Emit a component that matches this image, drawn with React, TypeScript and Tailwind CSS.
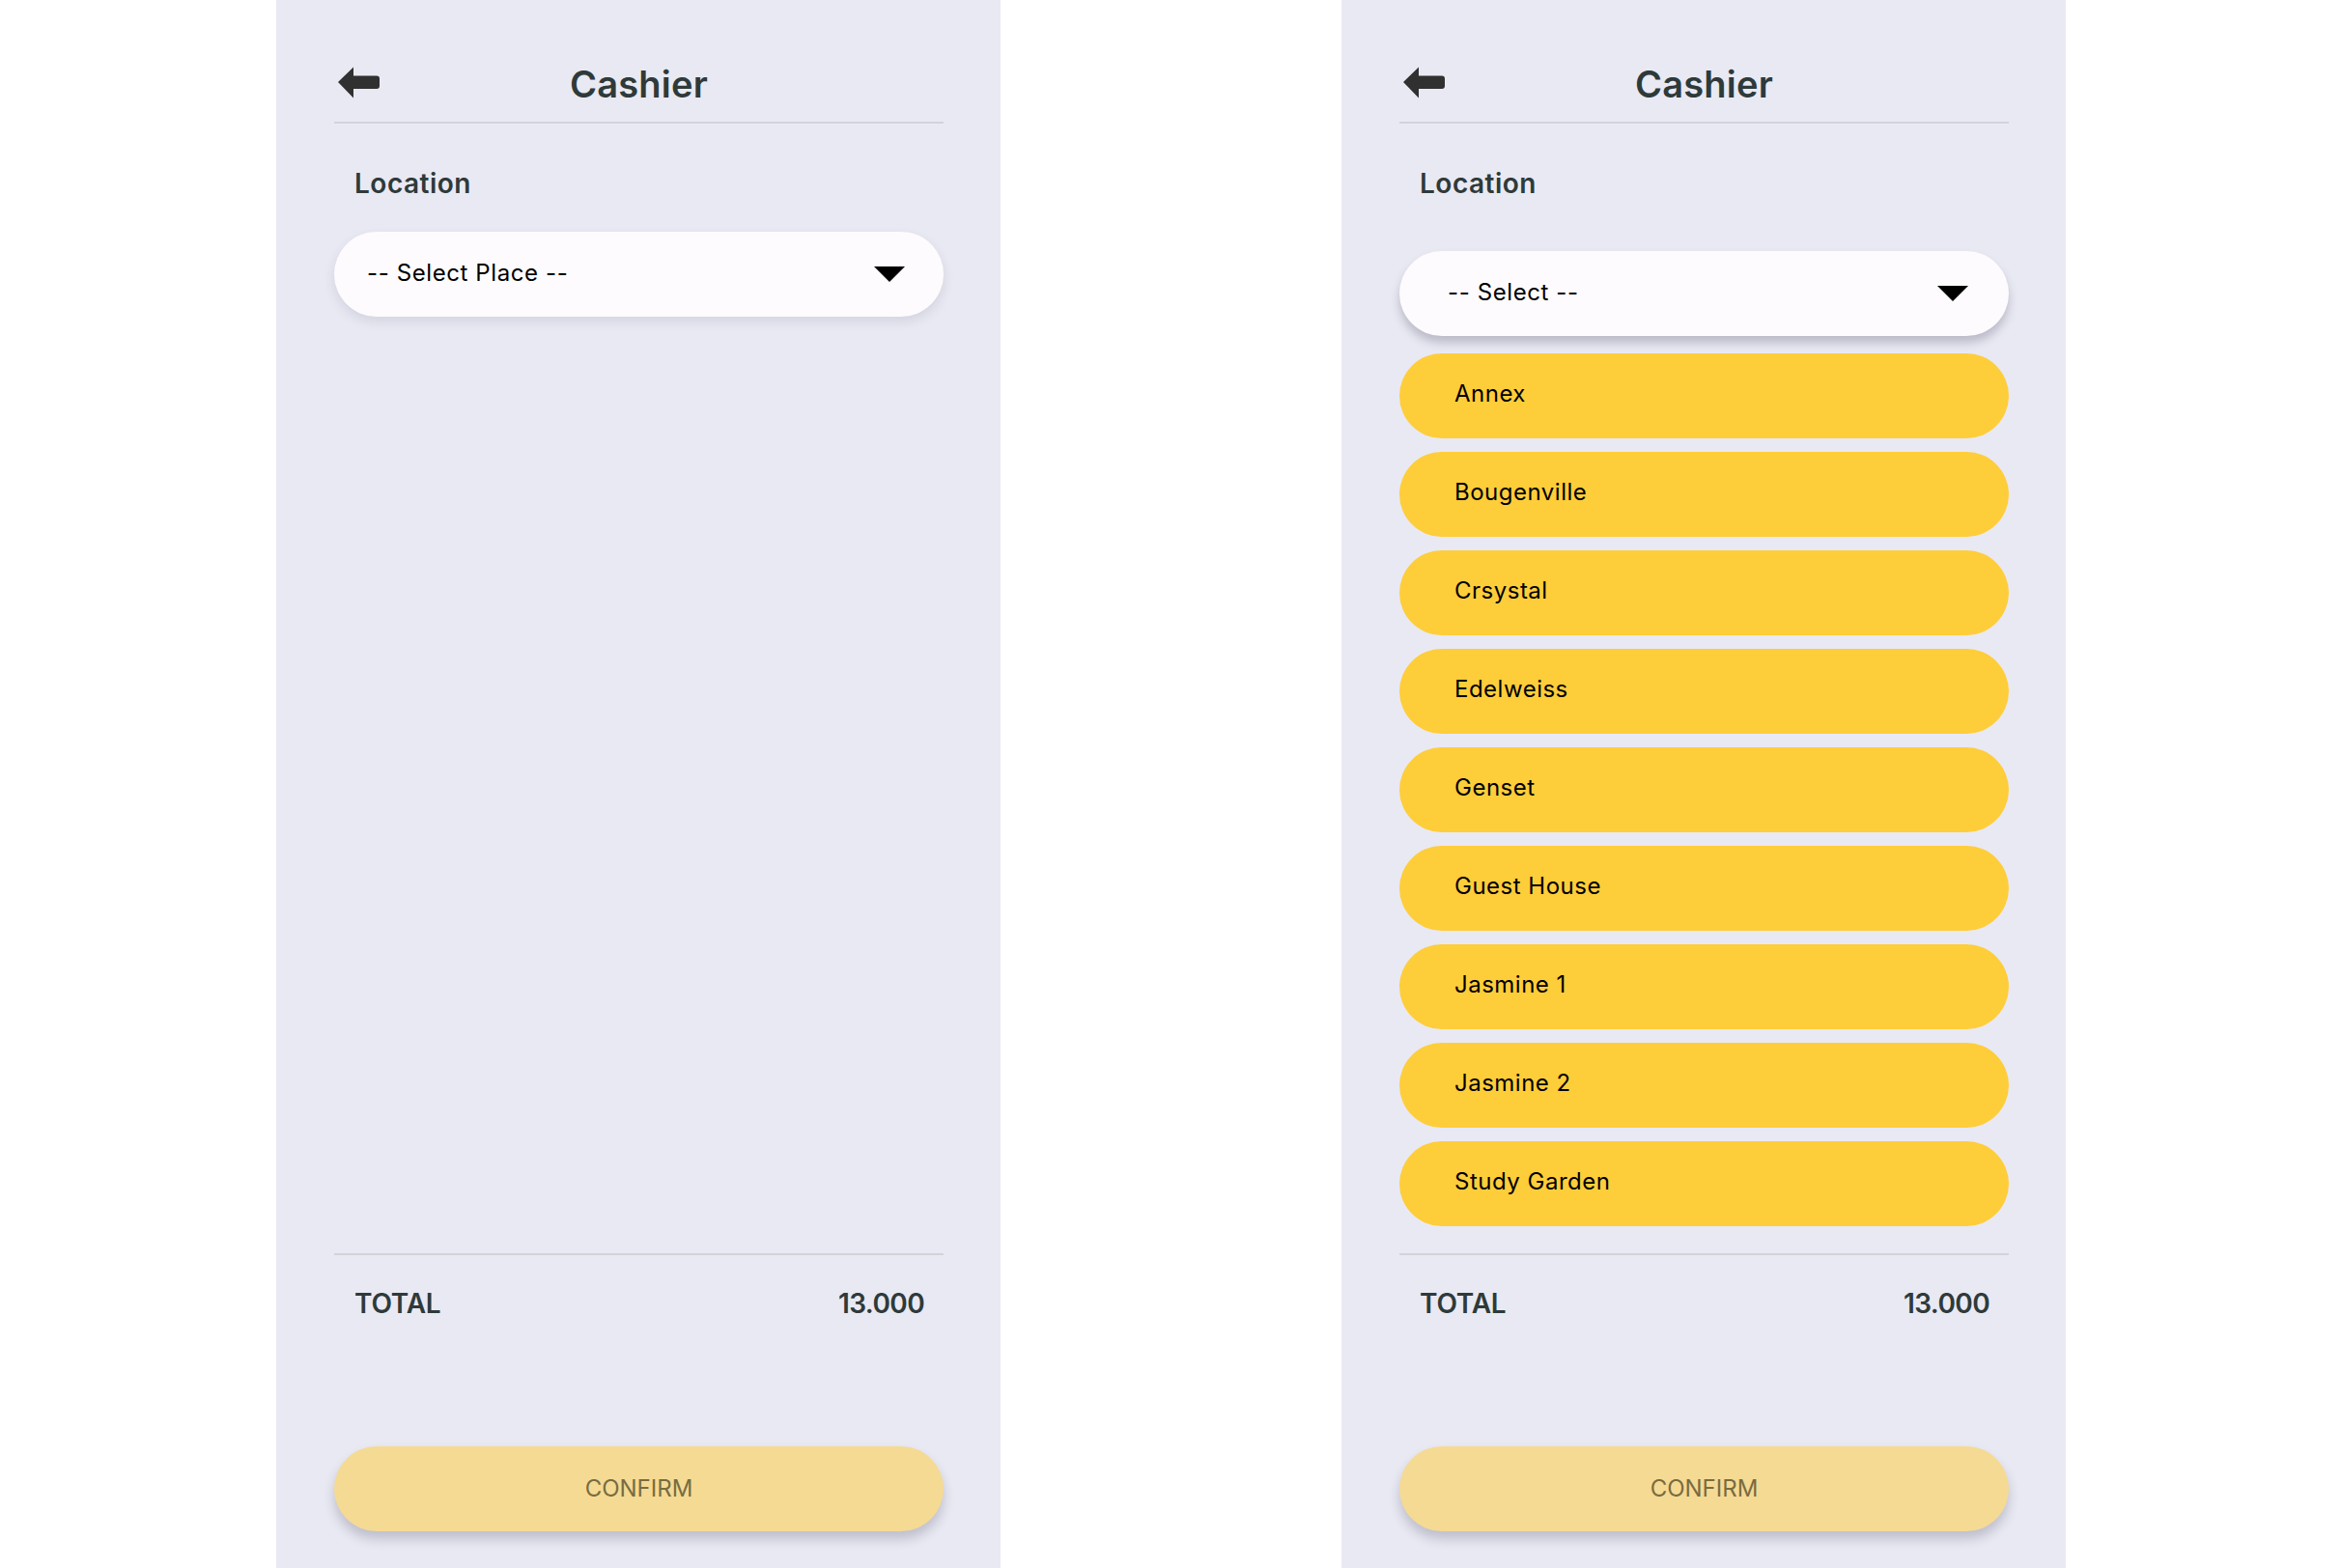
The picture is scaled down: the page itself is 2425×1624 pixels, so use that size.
import React from "react";

const FONT = { fontFamily: "Inter, 'Noto Sans', 'Open Sans', sans-serif" };

function BackArrow() {
  return (
    <svg width="46" height="34" viewBox="0 0 46 34" className="block">
      <path
        d="M1 16 L17 0.5 L17 9.5 L41 9.5 Q44 9.5 44 12.5 L44 20 Q44 23 41 23 L17 23 L17 32.5 Z"
        fill="#303030"
      />
    </svg>
  );
}

function Caret() {
  return (
    <svg width="32" height="16" viewBox="0 0 32 16" className="block">
      <polygon points="0,0 32,0 16,16" fill="#000000" />
    </svg>
  );
}

function Header() {
  return (
    <div className="pt-[67px] pb-[19px] border-b-2 border-[#d3d3d9]">
      <div className="grid grid-cols-[1fr_auto_1fr] items-center h-[40px]">
        <div className="pl-[3px] -mt-[2px]">
          <BackArrow />
        </div>
        <div className="text-[38px] leading-[40px] font-semibold text-[#2e3a3a] tracking-[0.2px]">
          Cashier
        </div>
        <div />
      </div>
    </div>
  );
}

function Footer() {
  return (
    <div className="border-t-2 border-[#d3d3d9] pb-[38px]">
      <div className="mt-[36px] flex justify-between pl-[21px] pr-[20px] text-[28px] leading-[28px] font-semibold text-[#2e3a3a]">
        <span className="tracking-[-0.2px]">TOTAL</span>
        <span className="tracking-[-0.6px]">13.000</span>
      </div>
      <button className="mt-[134px] w-full h-[88px] rounded-full bg-[#f5da94] text-[24px] text-[#786c3f] shadow-[0_8px_12px_rgba(40,40,70,0.22)] flex items-center justify-center">
        CONFIRM
      </button>
    </div>
  );
}

const places = [
  "Annex",
  "Bougenville",
  "Crsystal",
  "Edelweiss",
  "Genset",
  "Guest House",
  "Jasmine 1",
  "Jasmine 2",
  "Study Garden",
];

function LeftPanel() {
  return (
    <div className="w-[750px] h-[1624px] bg-[#e9e9f3] flex flex-col pl-[60px] pr-[59px]">
      <Header />
      <div className="flex-1 flex flex-col">
        <div className="mt-[48px] pl-[21px] text-[28px] leading-[28px] font-semibold text-[#2e3a3a] tracking-[0.5px]">
          Location
        </div>
        <div className="mt-[36px] h-[88px] rounded-full bg-[#fdfbfd] shadow-[0_5px_12px_rgba(60,60,100,0.12)] flex items-center justify-between pl-[34px] pr-[40px]">
          <span className="text-[24px] text-black tracking-[0.6px] pb-[3px]">-- Select Place --</span>
          <Caret />
        </div>
      </div>
      <Footer />
    </div>
  );
}

function RightPanel() {
  return (
    <div className="w-[750px] h-[1624px] bg-[#e9e9f3] flex flex-col pl-[60px] pr-[59px]">
      <Header />
      <div className="flex-1 flex flex-col">
        <div className="mt-[48px] pl-[21px] text-[28px] leading-[28px] font-semibold text-[#2e3a3a] tracking-[0.5px]">
          Location
        </div>
        <div className="mt-[56px] h-[88px] rounded-full bg-[#fdfbfd] shadow-[0_7px_10px_rgba(50,50,80,0.25)] flex items-center justify-between pl-[50px] pr-[42px]">
          <span className="text-[24px] text-black tracking-[0.6px] pb-[3px]">-- Select --</span>
          <Caret />
        </div>
        <div className="mt-[18px] flex flex-col gap-[14px]">
          {places.map((p) => (
            <div
              key={p}
              className="h-[88px] rounded-full bg-[#fecd3a] flex items-center pl-[57px] pb-[5px] text-[24px] text-black tracking-[0.5px]"
            >
              {p}
            </div>
          ))}
        </div>
      </div>
      <Footer />
    </div>
  );
}

export default function App() {
  return (
    <div className="w-full min-h-[1624px] bg-white flex justify-center gap-[353px]" style={FONT}>
      <LeftPanel />
      <RightPanel />
    </div>
  );
}
